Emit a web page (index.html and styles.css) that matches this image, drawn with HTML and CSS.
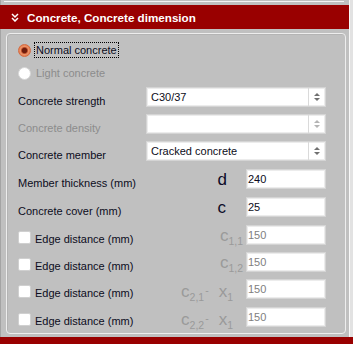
FILE: index.html
```html
<!DOCTYPE html>
<html>
<head>
<meta charset="utf-8">
<link rel="stylesheet" href="styles.css">
</head>
<body>
<div class="window">
  <div class="upper">
    <div class="main">
      <div class="top-strip"><div class="top-line"></div></div>
      <div class="section-header">
        <svg class="chevron" width="8" height="9" viewBox="0 0 8 9"><path d="M1 1 L4 4 L7 1 M1 5 L4 8 L7 5" fill="none" stroke="#fff" stroke-width="1.5"/></svg>
        <span class="title">Concrete, Concrete dimension</span>
      </div>
      <div class="section-body">
        <div class="group">
          <div class="radio-row">
            <span class="radio checked"></span>
            <span class="radio-label focus">Normal concrete</span>
          </div>
          <div class="radio-row second">
            <span class="radio disabled"></span>
            <span class="radio-label disabled-text">Light concrete</span>
          </div>

          <div class="form-row first">
            <span class="label">Concrete strength</span>
            <div class="combo"><span class="combo-text">C30/37</span><span class="spin"><i class="up"></i><i class="down"></i></span></div>
          </div>
          <div class="form-row">
            <span class="label disabled-text">Concrete density</span>
            <div class="combo"><span class="combo-text"></span><span class="spin off"><i class="up"></i><i class="down"></i></span></div>
          </div>
          <div class="form-row">
            <span class="label">Concrete member</span>
            <div class="combo"><span class="combo-text">Cracked concrete</span><span class="spin"><i class="up"></i><i class="down"></i></span></div>
          </div>

          <div class="form-row plus">
            <span class="label">Member thickness (mm)</span>
            <span class="sym sym-d">d</span>
            <input class="field" type="text" value="240">
          </div>
          <div class="form-row plus">
            <span class="label">Concrete cover (mm)</span>
            <span class="sym sym-c">c</span>
            <input class="field" type="text" value="25">
          </div>
          <div class="form-row plus">
            <span class="check"></span>
            <span class="label">Edge distance (mm)</span>
            <span class="sym sym-off sym-sub">c<sub>1,1</sub></span>
            <input class="field off" type="text" value="150" disabled>
          </div>
          <div class="form-row">
            <span class="check"></span>
            <span class="label">Edge distance (mm)</span>
            <span class="sym sym-off sym-sub">c<sub>1,2</sub></span>
            <input class="field off" type="text" value="150" disabled>
          </div>
          <div class="form-row">
            <span class="check"></span>
            <span class="label">Edge distance (mm)</span>
            <span class="sym sym-off sym-x">c<sub>2,1</sub><span class="minus">-</span>x<sub>1</sub></span>
            <input class="field off" type="text" value="150" disabled>
          </div>
          <div class="form-row plus">
            <span class="check"></span>
            <span class="label">Edge distance (mm)</span>
            <span class="sym sym-off sym-x">c<sub>2,2</sub><span class="minus">-</span>x<sub>1</sub></span>
            <input class="field off" type="text" value="150" disabled>
          </div>
        </div>
      </div>
    </div>
    <div class="edge"></div>
  </div>
  <div class="next-header"></div>
</div>
</body>
</html>
```
FILE: styles.css
```css
* { box-sizing: border-box; }
body {
  margin: 0;
  background: #c0c0c0;
  font-family: "Liberation Sans", Arial, sans-serif;
  font-size: 11px;
  color: #0c0c20;
}
.window {
  width: 353px;
  height: 344px;
  display: flex;
  flex-direction: column;
  overflow: hidden;
}
.upper {
  display: flex;
  height: 337px;
}
.main {
  width: 349px;
  display: flex;
  flex-direction: column;
}
.edge {
  width: 4px;
  background: #e2e2e2;
  border-left: 1px solid #f8f8f8;
}
.top-strip {
  height: 5px;
  padding: 1px 5px 0 3px;
  border-left: 1px solid #a4a4a4;
}
.top-line {
  height: 1px;
  background: #f4f4f4;
}
.section-header {
  height: 24px;
  background: #990000;
  color: #fff;
  display: flex;
  align-items: center;
  padding-left: 11px;
  gap: 8px;
}
.chevron { display: block; margin-top: 1px; }
.title {
  font-weight: bold;
  font-size: 11.65px;
  letter-spacing: 0;
}
.section-body {
  flex: 1;
  border-left: 1px solid #a4a4a4;
  padding: 4px 3px 3px 5px;
}
.group {
  height: 301px;
  border: 1px solid #ededed;
  border-radius: 4px;
  box-shadow: inset 1px 1px 0 #b4b4b4;
  padding: 8px 19px 0 11px;
}
.radio-row {
  height: 16px;
  display: flex;
  align-items: center;
}
.radio-row.second { margin-top: 7px; }
.radio {
  width: 13px;
  height: 13px;
  border-radius: 50%;
  flex: none;
  margin-right: 3px;
}
.radio.checked {
  border: 1px solid #d46a40;
  background: radial-gradient(circle, #6e1c0c 0 2.2px, #b84a28 3px, #ee9468 4px, #e27a4c 6px);
}
.radio.disabled {
  background: #fff;
  border: 1px solid #d6d6d6;
}
.radio-label {
  padding: 0 1px;
  line-height: 14px;
  border: 1px solid transparent;
}
.radio-label.focus {
  border: 1px dotted #000;
}
.disabled-text { color: #8c8c8c; }

.form-row {
  height: 20px;
  display: flex;
  align-items: flex-start;
  margin-top: 7px;
}
.form-row.first { margin-top: 6px; }
.form-row.plus { margin-top: 8px; }
.label {
  padding-top: 8px;
  line-height: 13px;
  white-space: nowrap;
}
.combo {
  margin-left: auto;
  width: 180px;
  height: 20px;
  background: #fff;
  border: 1px solid #d4d4d4;
  box-shadow: inset 0 0 0 1px #ececec;
  display: flex;
  align-items: center;
}
.combo-text {
  flex: 1;
  padding-left: 4px;
  line-height: 13px;
}
.spin {
  width: 17px;
  height: 100%;
  border-left: 1px solid #dadada;
  display: flex;
  flex-direction: column;
  align-items: center;
  justify-content: center;
  gap: 2px;
}
.spin i {
  display: block;
  width: 0;
  height: 0;
  border-left: 3.5px solid transparent;
  border-right: 3.5px solid transparent;
}
.spin .up { border-bottom: 3px solid #707070; }
.spin .down { border-top: 3px solid #707070; }
.spin.off .up { border-bottom-color: #b4b4b4; }
.spin.off .down { border-top-color: #b4b4b4; }

.sym {
  margin-left: auto;
  font-size: 17px;
  line-height: 20px;
  padding-top: 1px;
  white-space: nowrap;
  color: #0c0c28;
}
.sym-d { margin-right: 19px; }
.sym-c { margin-right: 20px; }
.sym-off { color: #9a9a9a; }
.sym-sub { margin-right: 3px; }
.sym-x { margin-right: 13px; }
.sym sub {
  font-size: 10.5px;
  vertical-align: -4px;
  line-height: 0;
}
.minus {
  font-size: 10.5px;
  vertical-align: 3px;
  margin: 0 10px 0 1px;
}
.field {
  width: 80px;
  height: 20px;
  margin: 0;
  padding: 0 0 1px 1px;
  border: 1px solid #d4d4d4;
  box-shadow: inset 0 0 0 1px #ececec;
  background: #fff;
  font-family: "Liberation Sans", Arial, sans-serif;
  font-size: 11px;
  color: #0c0c20;
  outline: none;
}
.field.off { color: #808080; }
.check {
  width: 13px;
  height: 13px;
  flex: none;
  margin-top: 6px;
  margin-right: 4px;
  background: #fff;
  border: 1px solid #d0d0d0;
  border-radius: 2px;
}
.next-header {
  height: 7px;
  background: #990000;
}
```
